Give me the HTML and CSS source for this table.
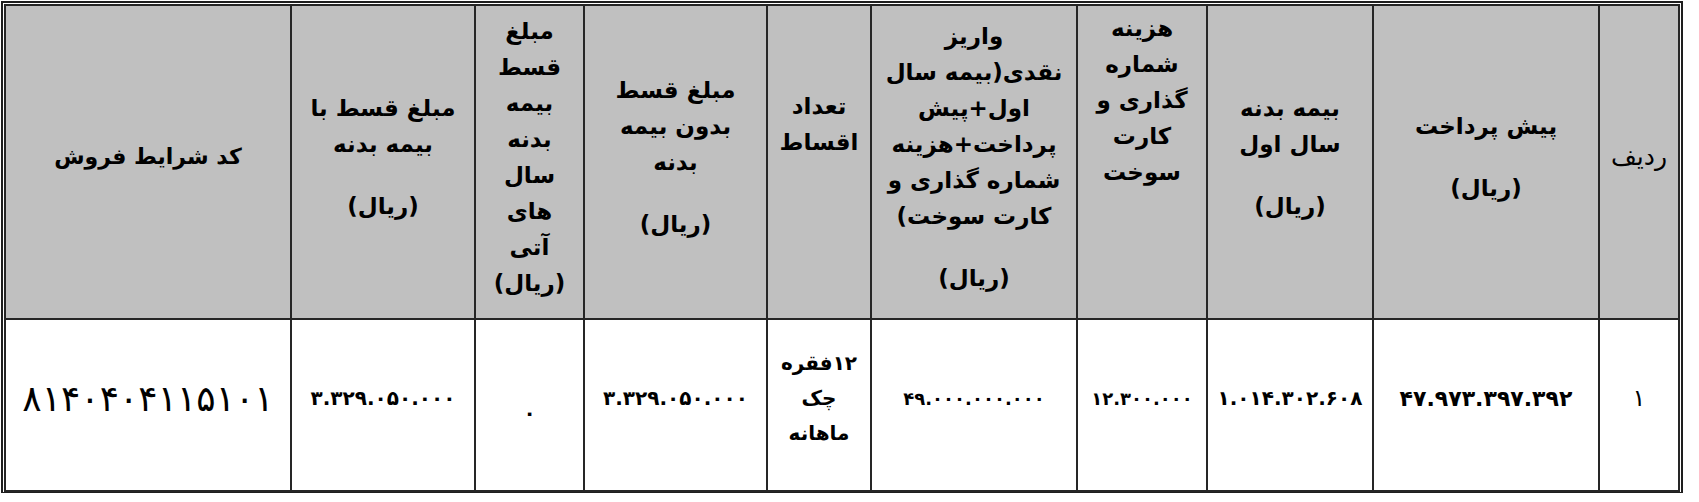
FILE: index.html
```html
<!DOCTYPE html>
<html lang="fa">
<head>
<meta charset="utf-8">
<title>شرایط فروش</title>
<link rel="stylesheet" href="styles.css">
</head>
<body>
<div class="frame">
<table class="grid">
<colgroup>
<col class="w-radif">
<col class="w-pish">
<col class="w-bime">
<col class="w-hazine">
<col class="w-variz">
<col class="w-tedad">
<col class="w-bedun">
<col class="w-ati">
<col class="w-ba">
<col class="w-kod">
</colgroup>
<thead>
<tr class="head">
<th class="h-radif">ردیف</th>
<th><div class="t">پیش پرداخت</div><div class="u">(ریال)</div></th>
<th><div class="t">بیمه بدنه<br>سال اول</div><div class="u">(ریال)</div></th>
<th class="top"><div class="t">هزینه<br>شماره<br>گذاری و<br>کارت<br>سوخت</div></th>
<th><div class="t">واریز<br>نقدی(بیمه سال<br>اول+پیش<br>پرداخت+هزینه<br>شماره گذاری و<br>کارت سوخت)</div><div class="u">(ریال)</div></th>
<th class="raise"><div class="t">تعداد<br>اقساط</div></th>
<th><div class="t">مبلغ قسط<br>بدون بیمه<br>بدنه</div><div class="u">(ریال)</div></th>
<th><div class="t">مبلغ<br>قسط<br>بیمه<br>بدنه<br>سال<br>های<br>آتی<br>(ریال)</div></th>
<th><div class="t">مبلغ قسط با<br>بیمه بدنه</div><div class="u">(ریال)</div></th>
<th class="h-kod">کد شرایط فروش</th>
</tr>
</thead>
<tbody>
<tr class="body">
<td class="plain">۱</td>
<td class="wide">۴۷.۹۷۳.۳۹۷.۳۹۲</td>
<td>۱.۰۱۴.۳۰۲.۶۰۸</td>
<td class="small">۱۲.۳۰۰.۰۰۰</td>
<td class="small">۴۹.۰۰۰.۰۰۰.۰۰۰</td>
<td class="words">۱۲فقره<br>چک<br>ماهانه</td>
<td>۳.۳۲۹.۰۵۰.۰۰۰</td>
<td class="zero">۰</td>
<td>۳.۳۲۹.۰۵۰.۰۰۰</td>
<td class="code">۸۱۴۰۴۰۴۱۱۵۱۰۱</td>
</tr>
</tbody>
</table>
</div>
</body>
</html>
```

FILE: styles.css
```css
html, body {
  margin: 0;
  padding: 0;
  background: #ffffff;
}

body {
  font-family: "DejaVu Sans", sans-serif;
  color: #000;
}

.frame {
  margin: 1px 0 0 1px;
  width: 1676px;
  border: 2px solid #1e1e1e;
  border-bottom-width: 1px;
  padding: 1px 1px 0 1px;
}

.grid {
  direction: rtl;
  width: 1676px;
  table-layout: fixed;
  border-collapse: collapse;
  border: 2px solid #1e1e1e;
}

.w-radif { width: 80px; }
.w-pish { width: 226px; }
.w-bime { width: 166px; }
.w-hazine { width: 130px; }
.w-variz { width: 206px; }
.w-tedad { width: 104px; }
.w-bedun { width: 183px; }
.w-ati { width: 109px; }
.w-ba { width: 184px; }
.w-kod { width: 286px; }

.grid th,
.grid td {
  border: 2px solid #262626;
  text-align: center;
  vertical-align: middle;
  padding: 0;
  white-space: nowrap;
}

.head th {
  background: #c0c0c0;
  height: 314px;
  font-weight: bold;
  font-size: 23px;
  line-height: 36px;
  padding-bottom: 10px;
  box-sizing: border-box;
}

.head .h-radif {
  font-weight: normal;
  font-size: 25px;
}

.head .h-kod {
  font-size: 22px;
}

.head .u {
  margin-top: 26px;
}

.head th.top {
  vertical-align: top;
  padding-top: 4px;
  padding-bottom: 0;
}

.head th.raise {
  padding-bottom: 76px;
}

.body td {
  height: 172px;
  font-size: 20px;
  font-weight: bold;
  padding-bottom: 14px;
  box-sizing: border-box;
}

.body td.wide {
  font-size: 22px;
}

.body td.small {
  font-size: 18px;
}

.body td.plain {
  font-weight: normal;
  font-size: 24px;
}

.body td.words {
  font-size: 20px;
  line-height: 35px;
}

.body td.zero {
  font-size: 20px;
  padding-top: 30px;
}

.body td.code {
  font-weight: normal;
  font-size: 36px;
}
```
